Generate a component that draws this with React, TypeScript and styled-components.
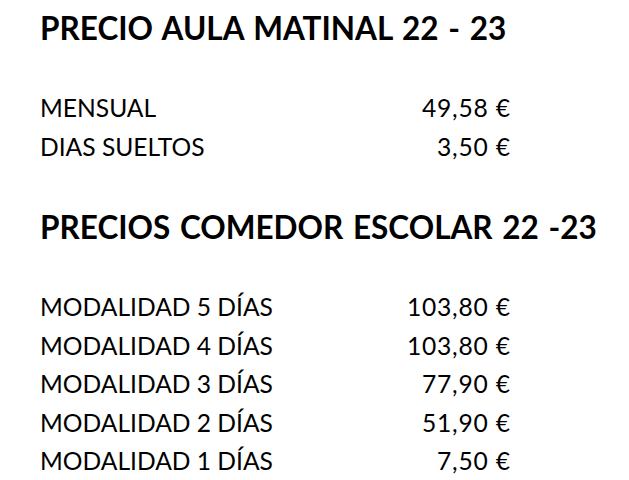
import React from 'react';
import styled, { createGlobalStyle } from 'styled-components';

const GlobalStyle = createGlobalStyle`
  html, body {
    margin: 0;
    padding: 0;
    background: #ffffff;
  }
  body {
    font-family: 'Lato', 'Open Sans', sans-serif;
    color: #000;
  }
`;

const Page = styled.div`
  width: 629px;
  height: 480px;
  padding: 8px 0 0 40px;
  box-sizing: border-box;
  display: flex;
  flex-direction: column;
  gap: 41px;
  overflow: hidden;
`;

const Section = styled.section`
  display: flex;
  flex-direction: column;
  gap: 41px;
`;

const Title = styled.h1`
  margin: 0;
  font-size: 31.5px;
  font-weight: 700;
  line-height: 40px;
  word-spacing: 2px;
  white-space: nowrap;
`;

const PriceTable = styled.div`
  display: grid;
  grid-template-columns: 290px 180px;
  grid-auto-rows: 38.5px;
  align-items: center;
`;

const Label = styled.span`
  font-size: 24.6px;
  line-height: 38.5px;
  white-space: nowrap;
`;

const Price = styled.span`
  font-size: 24.6px;
  line-height: 38.5px;
  letter-spacing: 0.8px;
  margin-right: -0.8px;
  text-align: right;
  white-space: nowrap;
`;

type Row = { label: string; price: string };

const matinal: Row[] = [
  { label: 'MENSUAL', price: '49,58 €' },
  { label: 'DIAS SUELTOS', price: '3,50 €' },
];

const comedor: Row[] = [
  { label: 'MODALIDAD 5 DÍAS', price: '103,80 €' },
  { label: 'MODALIDAD 4 DÍAS', price: '103,80 €' },
  { label: 'MODALIDAD 3 DÍAS', price: '77,90 €' },
  { label: 'MODALIDAD 2 DÍAS', price: '51,90 €' },
  { label: 'MODALIDAD 1 DÍAS', price: '7,50 €' },
];

const Table: React.FC<{ rows: Row[] }> = ({ rows }) => (
  <PriceTable>
    {rows.map((r) => (
      <React.Fragment key={r.label}>
        <Label>{r.label}</Label>
        <Price>{r.price}</Price>
      </React.Fragment>
    ))}
  </PriceTable>
);

const App: React.FC = () => {
  return (
    <>
      <GlobalStyle />
      <Page>
        <Section>
          <Title>PRECIO AULA MATINAL 22 - 23</Title>
          <Table rows={matinal} />
        </Section>
        <Section>
          <Title>PRECIOS COMEDOR ESCOLAR 22 -23</Title>
          <Table rows={comedor} />
        </Section>
      </Page>
    </>
  );
};

export default App;
